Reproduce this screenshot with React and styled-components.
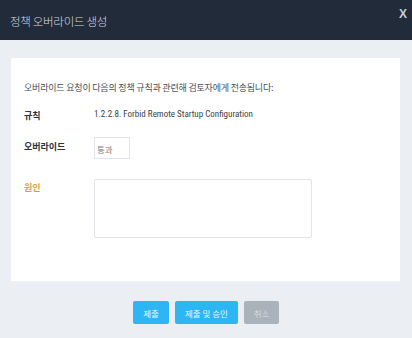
import React from 'react';
import styled, { createGlobalStyle } from 'styled-components';

const GlobalStyle = createGlobalStyle`
    html, body {
        margin: 0;
        padding: 0;
        background: #ebeef3;
    }
    body {
        font-family: "Noto Sans CJK KR", "Noto Sans", sans-serif;
    }
`;

const Modal = styled.div`
    width: 412px;
    height: 338px;
    background: #ebeef3;
    display: flex;
    flex-direction: column;
`;

const Header = styled.div`
    height: 40px;
    background: #222b39;
    display: flex;
    align-items: center;
    justify-content: space-between;
    padding: 0 5px 0 10px;
    box-sizing: border-box;
`;

const Title = styled.div`
    color: #d5dae0;
    font-size: 11.5px;
    font-weight: 300;
    letter-spacing: -0.3px;
    margin-top: 1px;
`;

const Close = styled.div`
    color: #c9ced4;
    font-family: "Liberation Sans", Arial, sans-serif;
    font-weight: bold;
    font-size: 12px;
    margin-top: -12px;
`;

const Body = styled.div`
    padding: 18px 12px 0 11px;
`;

const Panel = styled.div`
    background: #fff;
    height: 223px;
    padding: 23px 13px 0 13px;
    box-sizing: border-box;
`;

const Intro = styled.div`
    font-size: 9px;
    color: #4a4f55;
    letter-spacing: -0.2px;
    margin-bottom: 15px;
`;

const Row = styled.div`
    display: flex;
    align-items: flex-start;
    margin-bottom: ${p => p.gap || 0}px;
`;

const Label = styled.div`
    width: 70px;
    font-size: 9px;
    font-weight: bold;
    color: ${p => p.warn ? '#d9a047' : '#2e3339'};
    padding-top: ${p => p.top || 0}px;
`;

const Value = styled.div`
    font-family: "Liberation Sans Narrow", "Roboto Condensed", "Liberation Sans", sans-serif;
    font-size: 9px;
    color: #3d4247;
`;

const SmallBox = styled.div`
    width: 36px;
    height: 22px;
    border: 1px solid #e1e4e8;
    box-sizing: border-box;
    font-size: 8.5px;
    color: #777c82;
    padding: 5px 0 0 2px;
`;

const TextArea = styled.div`
    width: 218px;
    height: 59px;
    border: 1px solid #e1e4e8;
    border-radius: 2px;
    box-sizing: border-box;
`;

const Footer = styled.div`
    display: flex;
    justify-content: center;
    gap: 6px;
    padding-top: 20px;
`;

const Button = styled.div`
    height: 23px;
    width: ${p => p.w}px;
    background: ${p => p.muted ? '#aab3bc' : '#2cb6f4'};
    color: ${p => p.muted ? '#d6dbe0' : '#eaf7ff'};
    border-radius: 2px;
    font-size: 8.5px;
    display: flex;
    align-items: center;
    justify-content: center;
`;

const App = () => {
    return (
        <>
            <GlobalStyle />
            <Modal>
                <Header>
                    <Title>정책 오버라이드 생성</Title>
                    <Close>X</Close>
                </Header>
                <Body>
                    <Panel>
                        <Intro>오버라이드 요청이 다음의 정책 규칙과 관련해 검토자에게 전송됩니다:</Intro>
                        <Row gap={15}>
                            <Label>규칙</Label>
                            <Value>1.2.2.8. Forbid Remote Startup Configuration</Value>
                        </Row>
                        <Row gap={20}>
                            <Label top={3}>오버라이드</Label>
                            <SmallBox>통과</SmallBox>
                        </Row>
                        <Row>
                            <Label warn top={2}>원인</Label>
                            <TextArea />
                        </Row>
                    </Panel>
                </Body>
                <Footer>
                    <Button w={36}>제출</Button>
                    <Button w={63}>제출 및 승인</Button>
                    <Button w={35} muted>취소</Button>
                </Footer>
            </Modal>
        </>
    );
};

export default App;
